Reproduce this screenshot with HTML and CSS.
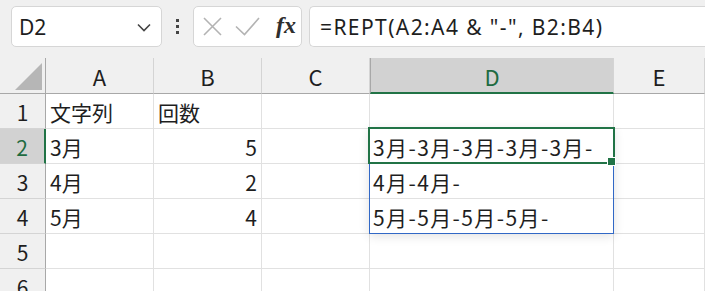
FILE: index.html
```html
<!DOCTYPE html>
<html lang="ja">

<head>
    <meta charset="UTF-8">
    <meta name="viewport" content="width=device-width, initial-scale=1.0">
    <title>REPT</title>
    <link rel="stylesheet" href="styles.css">
</head>

<body>

    <div class="barra">
        <div class="caixa-nome">
            <span>D2</span>
            <svg class="seta" width="14" height="9" viewBox="0 0 14 9">
                <path d="M1 1.5 L7 7.5 L13 1.5" fill="none" stroke="#444" stroke-width="1.6" />
            </svg>
        </div>
        <div class="pontos">
            <span></span><span></span><span></span>
        </div>
        <div class="caixa-fx">
            <svg width="19" height="19" viewBox="0 0 19 19">
                <path d="M1 1 L18 18 M18 1 L1 18" stroke="#b3b3b3" stroke-width="1.6" />
            </svg>
            <svg width="25" height="19" viewBox="0 0 25 19">
                <path d="M1 9.5 L9.5 17.5 L24 1" fill="none" stroke="#b3b3b3" stroke-width="1.6" />
            </svg>
            <span class="fx">fx</span>
        </div>
        <div class="formula">=REPT(A2:A4 &amp; "-", B2:B4)</div>
    </div>

    <div class="planilha">
        <div class="canto"><div class="triangulo"></div></div>
        <div class="col">A</div>
        <div class="col">B</div>
        <div class="col">C</div>
        <div class="col ativa">D</div>
        <div class="col">E</div>

        <div class="lin">1</div>
        <div class="cel">文字列</div>
        <div class="cel">回数</div>
        <div class="cel"></div>
        <div class="cel"></div>
        <div class="cel"></div>

        <div class="lin ativa">2</div>
        <div class="cel">3月</div>
        <div class="cel num">5</div>
        <div class="cel"></div>
        <div class="cel resultado selecionada">3月-3月-3月-3月-3月-
            <div class="spill"></div>
            <div class="cursor"><div class="alca"></div></div>
        </div>
        <div class="cel"></div>

        <div class="lin">3</div>
        <div class="cel">4月</div>
        <div class="cel num">2</div>
        <div class="cel"></div>
        <div class="cel resultado">4月-4月-</div>
        <div class="cel"></div>

        <div class="lin">4</div>
        <div class="cel">5月</div>
        <div class="cel num">4</div>
        <div class="cel"></div>
        <div class="cel resultado">5月-5月-5月-5月-</div>
        <div class="cel"></div>

        <div class="lin">5</div>
        <div class="cel"></div>
        <div class="cel"></div>
        <div class="cel"></div>
        <div class="cel"></div>
        <div class="cel"></div>

        <div class="lin">6</div>
        <div class="cel"></div>
        <div class="cel"></div>
        <div class="cel"></div>
        <div class="cel"></div>
        <div class="cel"></div>
    </div>

</body>

</html>
```

FILE: styles.css
```css
body {
    margin: 0;
    background: #ffffff;
    font-family: "Noto Sans CJK JP", "Noto Sans", sans-serif;
    color: #1e1e1e;
    overflow: hidden;
}

.barra {
    display: flex;
    align-items: flex-start;
    height: 58px;
    box-sizing: border-box;
    padding: 6px 0 0 11px;
    background: #f0f0f0;
}

.caixa-nome {
    display: flex;
    align-items: center;
    justify-content: space-between;
    width: 151px;
    height: 41px;
    box-sizing: border-box;
    padding: 0 10px 0 7px;
    background: #ffffff;
    border: 1px solid #d6d6d6;
    border-radius: 5px;
    font-family: "Noto Sans", sans-serif;
    font-size: 21px;
}

.seta {
    margin-top: 1px;
}

.pontos {
    display: flex;
    flex-direction: column;
    gap: 3px;
    width: 31px;
    align-items: center;
    padding-top: 13px;
}

.pontos span {
    width: 3px;
    height: 3px;
    background: #444444;
}

.caixa-fx {
    display: flex;
    align-items: center;
    width: 109px;
    height: 41px;
    box-sizing: border-box;
    padding: 0 0 0 9px;
    gap: 13px;
    background: #ffffff;
    border: 1px solid #d6d6d6;
    border-radius: 5px;
}

.fx {
    font-family: "Liberation Serif", serif;
    font-style: italic;
    font-weight: bold;
    font-size: 24px;
    color: #2e2e2e;
    margin-left: 3px;
    margin-bottom: 3px;
}

.formula {
    flex: 1;
    height: 41px;
    box-sizing: border-box;
    margin-left: 7px;
    padding: 0 0 0 10px;
    display: flex;
    align-items: center;
    background: #ffffff;
    border: 1px solid #d6d6d6;
    border-right: none;
    border-radius: 5px 0 0 5px;
    font-family: "Noto Sans", sans-serif;
    font-size: 21px;
    letter-spacing: 1.4px;
    white-space: pre;
}

.planilha {
    display: grid;
    grid-template-columns: 46px 108px 108px 108px 244px 1fr;
    grid-template-rows: 36px repeat(6, 35px);
}

.planilha > div {
    box-sizing: border-box;
    border-right: 1px solid #e1e1e1;
    border-bottom: 1px solid #e1e1e1;
}

.canto {
    display: flex;
    justify-content: flex-end;
    align-items: flex-end;
    padding: 0 3px 3px 0;
    background: #f0f0f0;
    border-right-color: #a8a8a8 !important;
    border-bottom-color: #a8a8a8 !important;
}

.triangulo {
    width: 27px;
    height: 27px;
    background: #b6b6b6;
    clip-path: polygon(100% 0, 100% 100%, 0 100%);
}

.col {
    display: flex;
    align-items: center;
    justify-content: center;
    background: #f0f0f0;
    border-right-color: #d4d4d4 !important;
    border-bottom-color: #a8a8a8 !important;
    font-size: 22px;
    padding-top: 1px;
}

.col.ativa {
    background: #d2d2d2;
    color: #1e6b41;
    border-left: 1px solid #a8a8a8;
    border-bottom: 2px solid #217346 !important;
}

.lin {
    display: flex;
    align-items: center;
    justify-content: center;
    background: #f0f0f0;
    border-right-color: #a8a8a8 !important;
    border-bottom-color: #d4d4d4 !important;
    font-size: 21px;
    padding-top: 2px;
}

.lin.ativa {
    background: #d2d2d2;
    color: #1e6b41;
    border-right: 2px solid #217346 !important;
}

.cel {
    display: flex;
    align-items: center;
    padding: 2px 4px 0;
    font-size: 21px;
    white-space: nowrap;
}

.num {
    justify-content: flex-end;
}

.resultado {
    padding-left: 3px;
    letter-spacing: 1.4px;
}

.selecionada {
    position: relative;
}

.spill {
    position: absolute;
    left: -1px;
    top: -1px;
    width: 245px;
    height: 106px;
    box-sizing: border-box;
    border: 1px solid #3168c6;
    box-shadow: 0 2px 10px rgba(0, 0, 0, 0.12);
    pointer-events: none;
}

.cursor {
    position: absolute;
    left: -2px;
    top: -2px;
    width: 247px;
    height: 37px;
    box-sizing: border-box;
    border: 2px solid #217346;
    pointer-events: none;
}

.alca {
    position: absolute;
    right: -2px;
    bottom: -3px;
    width: 7px;
    height: 7px;
    background: #217346;
    outline: 1px solid #ffffff;
}
```
